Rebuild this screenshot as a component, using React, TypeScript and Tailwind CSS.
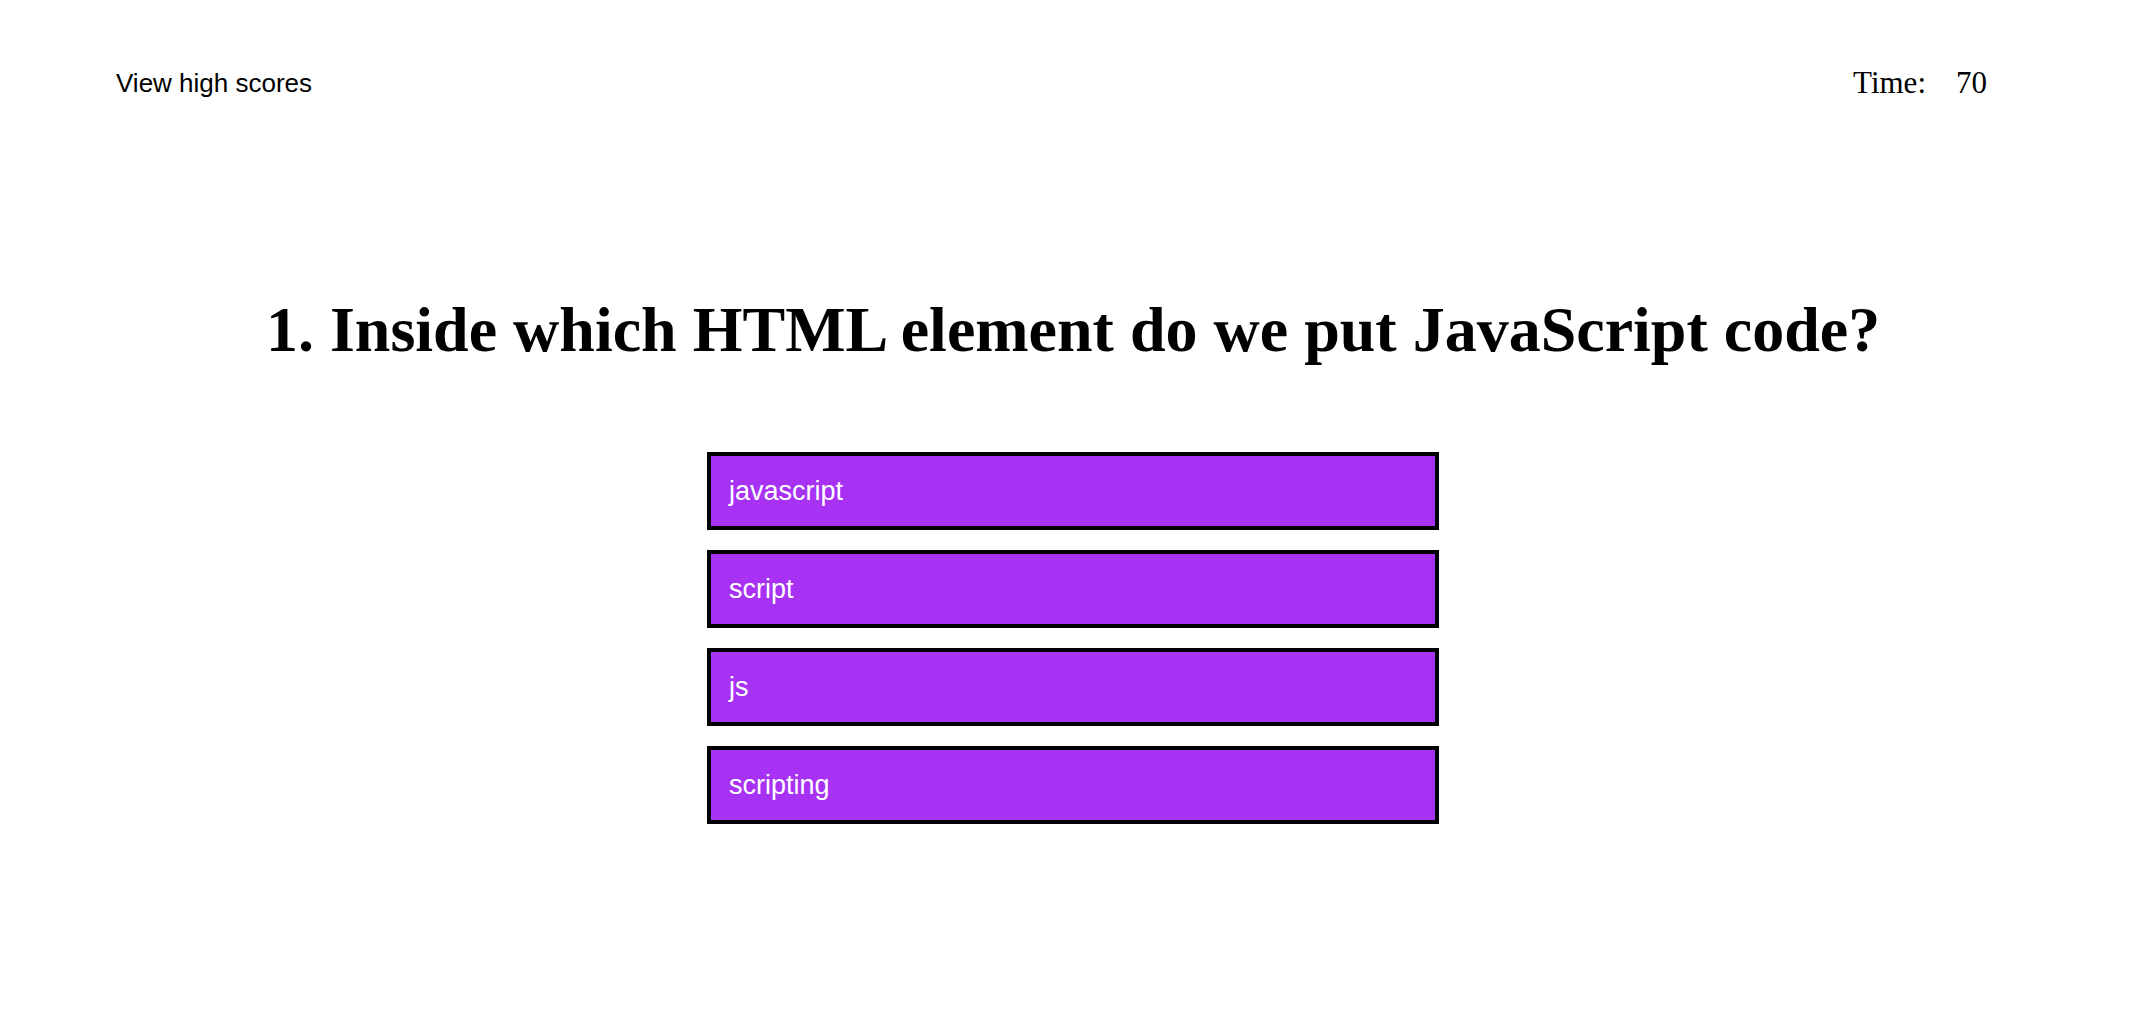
import React from "react";

const answers = ["javascript", "script", "js", "scripting"];

export default function App() {
  return (
    <div className="min-h-screen bg-white text-black">
      <header className="flex items-start justify-between pl-[116px] pr-[159px] pt-[65px]">
        <div className="mt-[3px] font-['Liberation_Sans',Arial,sans-serif] text-[26px] leading-[30px]">
          View high scores
        </div>
        <div className="flex gap-[30px] font-['Liberation_Serif','Times_New_Roman',serif] text-[31px] leading-[36px]">
          <span>Time:</span>
          <span>70</span>
        </div>
      </header>
      <h1 className="mt-[192px] text-center font-['Liberation_Serif','Times_New_Roman',serif] text-[64px] font-bold leading-[74px]">
        1. Inside which HTML element do we put JavaScript code?
      </h1>
      <div className="mx-auto mt-[85px] flex w-[732px] flex-col gap-[20px]">
        {answers.map((a) => (
          <button
            key={a}
            className="box-border flex h-[78px] w-full items-center border-4 border-black bg-[#a832f4] pl-[18px] text-left font-['Liberation_Sans',Arial,sans-serif] text-[27px] text-white"
          >
            {a}
          </button>
        ))}
      </div>
    </div>
  );
}
